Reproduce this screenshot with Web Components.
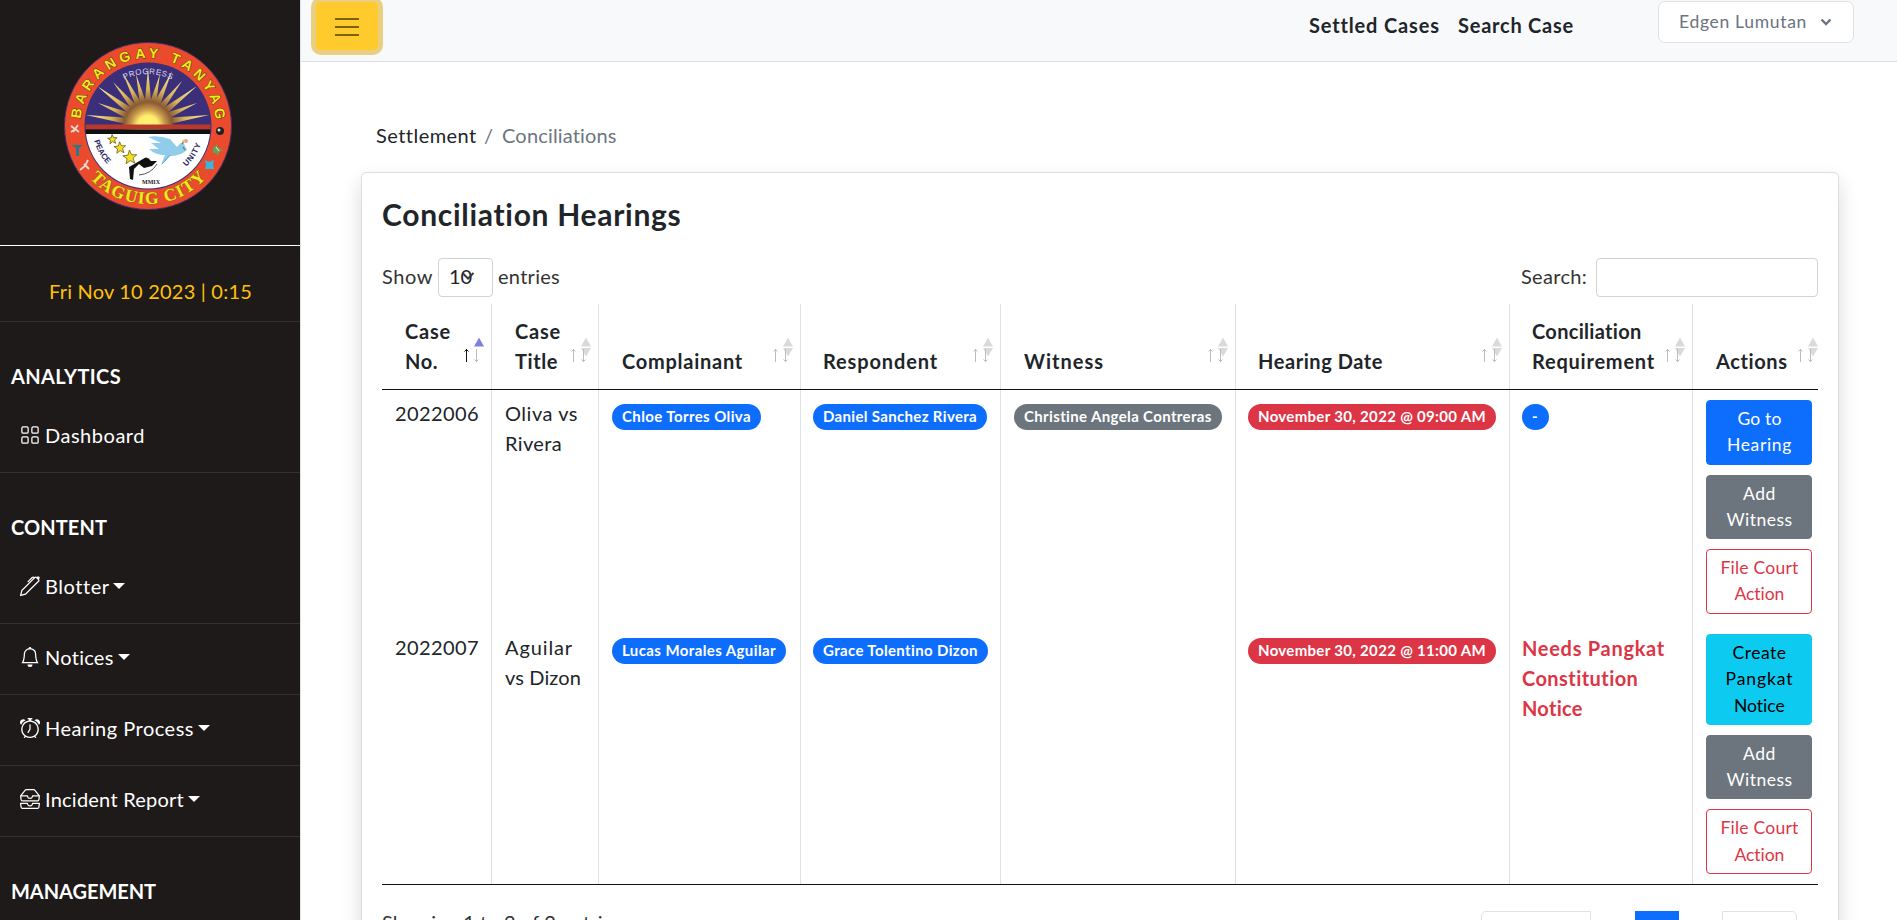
<!DOCTYPE html>
<html lang="en">
<head>
<meta charset="utf-8">
<title>Conciliation Hearings</title>
<style>
  html, body { margin: 0; height: 920px; overflow: hidden; background: #fff; }
  body { font: 400 20px/30px Lato, "Noto Sans", sans-serif; color: #212529; }
</style>
</head>
<body>
<app-shell></app-shell>
<script>
const define = (name, html, extra) => {
  const tpl = document.createElement('template');
  tpl.innerHTML = html;
  customElements.define(name, class extends HTMLElement {
    constructor() {
      super();
      this.attachShadow({ mode: 'open' }).append(tpl.content.cloneNode(true));
    }
    connectedCallback() { if (extra) extra.call(this, this.shadowRoot); }
  });
};

/* Single line of text tracked to an exact measure */
define('fit-text', `<style>:host{display:inline-block;white-space:nowrap}span{display:inline-block}</style><span></span>`, function (r) {
  const s = r.querySelector('span');
  s.textContent = this.getAttribute('t');
  const w = parseFloat(this.getAttribute('w'));
  const fit = () => {
    s.style.letterSpacing = '0';
    const n = s.getBoundingClientRect().width;
    if (n) {
      const k = (w - n) / s.textContent.length;
      s.style.letterSpacing = k.toFixed(3) + 'px';
    }
    this.style.width = w + 'px';
  };
  fit();
});

const ICONS = {
  grid: '<g fill="none" stroke="#fff"><rect x="1.5" y="1.5" width="5" height="5" rx="1"/><rect x="9.5" y="1.5" width="5" height="5" rx="1"/><rect x="1.5" y="9.5" width="5" height="5" rx="1"/><rect x="9.5" y="9.5" width="5" height="5" rx="1"/></g>',
  pen: '<path d="m13.498.795.149-.149a1.207 1.207 0 1 1 1.707 1.708l-.149.148a1.5 1.5 0 0 1-.059 2.059L4.854 14.854a.5.5 0 0 1-.233.131l-4 1a.5.5 0 0 1-.606-.606l1-4a.5.5 0 0 1 .131-.232l9.642-9.642a.5.5 0 0 0-.642.056L6.854 4.854a.5.5 0 1 1-.708-.708L9.44.854A1.5 1.5 0 0 1 11.5.796a1.5 1.5 0 0 1 1.998-.001zm-.644.766a.5.5 0 0 0-.707 0L1.95 11.756l-.764 3.057 3.057-.764L14.44 3.854a.5.5 0 0 0 0-.708l-1.585-1.585z"/>',
  bell: '<path d="M8 16a2 2 0 0 0 2-2H6a2 2 0 0 0 2 2zM8 1.918l-.797.161A4.002 4.002 0 0 0 4 6c0 .628-.134 2.197-.459 3.742-.16.767-.376 1.566-.663 2.258h10.244c-.287-.692-.502-1.49-.663-2.258C12.134 8.197 12 6.628 12 6a4.002 4.002 0 0 0-3.203-3.92L8 1.917zM14.22 12c.223.447.481.801.78 1H1c.299-.199.557-.553.78-1C2.68 10.2 3 6.88 3 6c0-2.42 1.72-4.44 4.005-4.901a1 1 0 1 1 1.99 0A5.002 5.002 0 0 1 13 6c0 .88.32 4.2 1.22 6z"/>',
  alarm: '<path d="M8.5 5.5a.5.5 0 0 0-1 0v3.362l-1.429 2.38a.5.5 0 1 0 .858.515l1.5-2.5A.5.5 0 0 0 8.5 9V5.5z"/><path d="M6.5 0a.5.5 0 0 0 0 1H7v1.07a7.001 7.001 0 0 0-3.273 12.474l-.602.602a.5.5 0 0 0 .707.708l.746-.746A6.97 6.97 0 0 0 8 16a6.97 6.97 0 0 0 3.422-.892l.746.746a.5.5 0 0 0 .707-.708l-.601-.602A7.001 7.001 0 0 0 9 2.07V1h.5a.5.5 0 0 0 0-1h-3zm1.038 3.018a6.093 6.093 0 0 1 .924 0 6 6 0 1 1-.924 0zM0 3.5c0 .753.333 1.429.86 1.887A8.035 8.035 0 0 1 4.387 1.86 2.5 2.5 0 0 0 0 3.5zM13.5 1c-.753 0-1.429.333-1.887.86a8.035 8.035 0 0 1 3.527 3.527A2.5 2.5 0 0 0 13.5 1z"/>',
  inboxes: '<path d="M4.98 1a.5.5 0 0 0-.39.188L1.54 5H6a.5.5 0 0 1 .5.5 1.5 1.5 0 0 0 3 0A.5.5 0 0 1 10 5h4.46l-3.05-3.812A.5.5 0 0 0 11.02 1H4.98zm9.954 5H10.45a2.5 2.5 0 0 1-4.9 0H1.066l.32 2.562A.5.5 0 0 0 1.884 9h12.234a.5.5 0 0 0 .496-.438L14.933 6zM3.809.563A1.5 1.5 0 0 1 4.981 0h6.038a1.5 1.5 0 0 1 1.172.563l3.7 4.625a.5.5 0 0 1 .105.374l-.39 3.124A1.5 1.5 0 0 1 14.117 10H1.883A1.5 1.5 0 0 1 .394 8.686l-.39-3.124a.5.5 0 0 1 .106-.374L3.81.563zM.125 11.17A.5.5 0 0 1 .5 11H6a.5.5 0 0 1 .5.5 1.5 1.5 0 0 0 3 0 .5.5 0 0 1 .5-.5h5.5a.5.5 0 0 1 .496.562l-.39 3.124A1.5 1.5 0 0 1 14.117 16H1.883a1.5 1.5 0 0 1-1.489-1.314l-.39-3.124a.5.5 0 0 1 .121-.393zm.941.83.32 2.562a.5.5 0 0 0 .497.438h12.234a.5.5 0 0 0 .496-.438l.32-2.562H10.45a2.5 2.5 0 0 1-4.9 0H1.066z"/>'
};

/* Sun rays: [tip x, tip y], fanning from the sun at (84, 82) */
const rays = [[22,73],[34,61],[33,44],[49,40],[59,31],[72,32],[84,26],[96,32],[108,29],[118,39],[133,44],[133,61],[145,73]].map(([x, y]) => {
  const dx = x - 84, dy = y - 82, l = Math.hypot(dx, dy), nx = -dy / l * 3.6, ny = dx / l * 3.6;
  const bx = 84 + dx / l * 17, by = 82 + dy / l * 17;
  return `<polygon points="${x},${y} ${bx + nx},${by + ny} ${bx - nx},${by - ny}"/>`;
}).join('');
const star = (cx, cy, r) => {
  let p = '';
  for (let i = 0; i < 10; i++) {
    const a = -Math.PI / 2 + i * Math.PI / 5 - .08, q = i % 2 ? r * .42 : r;
    p += (cx + q * Math.cos(a)).toFixed(1) + ',' + (cy + q * Math.sin(a)).toFixed(1) + ' ';
  }
  return `<polygon points="${p}" fill="#f6e01d" stroke="#6b5a1c" stroke-width=".8"/>`;
};

define('city-seal', `<style>:host{display:block;width:168px;height:168px}svg{display:block}text{font-family:"Liberation Sans",sans-serif;font-weight:700}</style>
<svg width="168" height="168" viewBox="0 0 168 168">
  <defs>
    <radialGradient id="sun" gradientUnits="userSpaceOnUse" cx="84" cy="84" r="62">
      <stop offset="0" stop-color="#fff67a"/><stop offset=".17" stop-color="#ffec6c"/><stop offset=".27" stop-color="#c99a4b"/><stop offset=".39" stop-color="#8a5a34"/><stop offset=".6" stop-color="#d8b45a"/><stop offset="1" stop-color="#f7ee9b"/>
    </radialGradient>
    <clipPath id="disc"><circle cx="84" cy="84" r="62.5"/></clipPath>
    <path id="top" d="M16 84 A68 68 0 0 1 152 84"/>
    <path id="bottom" d="M6 84 A78 78 0 0 0 162 84"/>
    <path id="prog" d="M32 84 A52 52 0 0 1 136 84"/>
    <path id="peace" d="M28 84 A56 56 0 0 0 70 138"/>
    <path id="unity" d="M98 138 A56 56 0 0 0 140 84"/>
  </defs>
  <circle cx="84" cy="84" r="83.5" fill="#e94b2c" stroke="#4a2d68" stroke-width="1"/>
  <circle cx="84" cy="84" r="63.5" fill="#3d2f78"/>
  <g clip-path="url(#disc)">
    <rect x="20" y="20" width="128" height="64" fill="#3c2f7a"/>
    <g fill="url(#sun)">${rays}<circle cx="84" cy="84" r="25"/></g>
    <rect x="20" y="82.5" width="128" height="5" fill="#b7392c"/>
    <rect x="20" y="87.5" width="128" height="4.5" fill="#111"/>
    <rect x="20" y="92" width="128" height="58" fill="#fff"/>
  </g>
  ${star(48.5, 97.5, 5)}${star(56, 106, 6.2)}${star(66, 115.5, 7.4)}
  <path d="M84 95 Q94 93 106 97 L113 105 Q119 98 120 102 L123 108 Q116 114 106 114 L97 123 L101 113 Q91 113 85 107 L95 107 L87 101 L97 101 Z" fill="#91cdea"/>
  <path d="M106 113 L101 119 L98 122" fill="none" stroke="#5aa7cb"/>
  <path d="M65 125 L79 117 Q83 113 87 119 L93 119 L88 124 L80 126 L75 122 L70 127 L69 138 L66 137 Z" fill="#111"/>
  <path d="M75 133 Q87 132 93 122" fill="none" stroke="#555"/>
  <path d="M118 102 L121 98 M119 105 L121 108" stroke="#4b8b3b" stroke-width="1.2"/><circle cx="122" cy="99" r="2" fill="#f29aa6"/><circle cx="119.5" cy="99" r="1.3" fill="#f2c63d"/>
  <text font-size="14" fill="#f1e91b" stroke="#5a3a12" stroke-width="1" paint-order="stroke"><textPath href="#top" startOffset="7" textLength="200" lengthAdjust="spacing">BARANGAY TANYAG</textPath></text>
  <text font-size="17.5" fill="#f1e91b" stroke="#8a6a1a" stroke-width=".9" paint-order="stroke" style="font-family:'Liberation Serif',serif"><textPath href="#bottom" startOffset="57" textLength="131" lengthAdjust="spacing">TAGUIG CITY</textPath></text>
  <text font-size="8" fill="#dcd8ea" style="font-weight:400"><textPath href="#prog" startOffset="57" textLength="49" lengthAdjust="spacing">PROGRESS</textPath></text>
  <text font-size="8" fill="#2b2763"><textPath href="#peace" startOffset="15" textLength="27">PEACE</textPath></text>
  <text font-size="8" fill="#2b2763"><textPath href="#unity" startOffset="28" textLength="27">UNITY</textPath></text>
  <text x="78" y="141.5" font-size="6.5" fill="#222" textLength="18" lengthAdjust="spacingAndGlyphs" style="font-family:'Liberation Serif',serif">MMIX</text>
  <g fill="none" stroke="#f3d9d0" stroke-width="1.8"><path d="M7 84l8 6M14 83l-5 7M7 90l3-2"/><path d="M24 118l-3 6-5 4M20 122l5 5"/></g>
  <path d="M8 103h11l-4 3v8h-3v-8z" fill="#2b7890"/>
  <circle cx="156" cy="89" r="4" fill="#222"/><circle cx="155" cy="88" r="1.5" fill="#ddd"/>
  <path d="M149 106l4-4 1 4 5 2-4 2-1 4-2-3-3 0z" fill="#5fa554"/><path d="M152 105l3 4" stroke="#eee"/>
  <path d="M141 118l4 2 5-2-1 5 1 4h-9l1-4z" fill="#3cb4e0"/>
</svg>`);

define('nav-heading', `<style>:host{display:block;padding:38px 0 12px 11px;font-weight:700;color:#fff}::slotted(*){position:relative;top:.5px}</style><slot></slot>`);

define('nav-item', `<style>
:host{display:block;border-bottom:1px solid #343130;color:#fff}
.row{display:flex;padding:18px 0 22px 20px;height:30px}
svg{width:20px;height:20px;margin-top:5px;fill:#fff;flex:none}
i{display:none;width:0;height:0;border:6px solid transparent;border-top-color:#fff;border-bottom:0;margin:12px 0 0 4px}
:host([drop]) i{display:block}
</style><div class="row"><svg viewBox="0 0 16 16"></svg><slot></slot><i></i></div>`, function (r) {
  r.querySelector('svg').innerHTML = ICONS[this.getAttribute('icon')];
});
define('side-bar', `<style>
:host{display:block;box-sizing:border-box;width:301px;height:920px;overflow:hidden;background:#1e1a19;border-right:1px solid #dee2e6}
.logo{box-sizing:border-box;height:246px;padding:42px 0 0 64px;border-bottom:1px solid #fff}
.date{box-sizing:border-box;height:76px;padding:30px 0 0 49px;border-bottom:1px solid #343130;color:#ffc107}
nav-item fit-text{margin-left:5px}
</style>
<div class="logo"><city-seal></city-seal></div>
<div class="date"><fit-text t="Fri Nov 10 2023 | 0:15" w="203"></fit-text></div>
<nav-heading><fit-text t="ANALYTICS" w="110"></fit-text></nav-heading>
<nav-item icon="grid"><fit-text t="Dashboard" w="100"></fit-text></nav-item>
<nav-heading><fit-text t="CONTENT" w="96"></fit-text></nav-heading>
<nav-item icon="pen" drop><fit-text t="Blotter" w="64"></fit-text></nav-item>
<nav-item icon="bell" drop><fit-text t="Notices" w="69"></fit-text></nav-item>
<nav-item icon="alarm" drop><fit-text t="Hearing Process" w="149"></fit-text></nav-item>
<nav-item icon="inboxes" drop><fit-text t="Incident Report" w="139"></fit-text></nav-item>
<nav-heading><fit-text t="MANAGEMENT" w="145"></fit-text></nav-heading>`);

define('top-bar', `<style>
:host{display:flex;box-sizing:border-box;height:62px;background:#f8f9fb;border-bottom:1px solid #dee0e4;padding-left:15px}
.burger{box-sizing:border-box;width:62px;height:48px;margin-top:2px;border-radius:5px;background:#ffca2c;box-shadow:0 0 0 5px #e9cf80;display:flex;flex-direction:column;gap:6px;padding:16px 0 0 19px}
.burger b{display:block;width:24px;height:2px;background:#7d6212}
.links{display:flex;gap:19px;margin-left:931px;padding-top:10px;font-weight:700}
.user{box-sizing:border-box;width:196px;height:42px;margin:1px 0 0 84px;border:1px solid #dfe1e5;border-radius:7px;background:#fff;color:#6b7280;font-size:17.5px;display:flex;padding:5px 0 0 20px}
.user svg{margin:11px 0 0 13px}
</style>
<div class="burger"><b></b><b></b><b></b></div>
<div class="links"><fit-text t="Settled Cases" w="130"></fit-text><fit-text t="Search Case" w="116"></fit-text></div>
<div class="user"><fit-text t="Edgen Lumutan" w="128"></fit-text><svg width="12" height="9" viewBox="0 0 12 9"><path d="M1.5 1.5 6 6l4.5-4.5" fill="none" stroke="#6b7280" stroke-width="2.3"/></svg></div>`);

define('pill-badge', `<style>
:host{display:block;box-sizing:border-box;height:26px;margin-top:6px;border-radius:13px;background:#0d6efd;color:#fff;font-weight:700;font-size:15px;line-height:24px;padding-left:10px;width:max-content;padding-right:10px}
:host([tone=gray]){background:#6c757d}:host([tone=red]){background:#dc3545}
</style><slot></slot>`);

define('action-button', `<style>
:host{display:flex;flex-direction:column;align-items:center;box-sizing:border-box;width:106px;padding:5px 0 5px 1px;border:1px solid var(--c);border-radius:4px;background:var(--c);color:#fff;font-size:17.5px;line-height:26.25px;--c:#0d6efd}
:host([tone=gray]){--c:#6c757d}
:host([tone=cyan]){--c:#0dcaf0;color:#000}
:host([tone=line]){--c:#dc3545;background:#fff;color:#dc3545}
</style><slot></slot>`);

define('sort-mark', `<style>:host{display:block;position:absolute;top:33px;right:5px;width:24px;height:26px;overflow:hidden}:host([last]){right:0;width:22px}svg{display:block}
g{stroke:#bdbdbd;fill:none}.t{fill:#dadadc;stroke:none}:host([active]) .u{stroke:#111}:host([active]) .tu{fill:#7d81e2}:host([active]) .td{display:none}</style>
<svg width="25" height="26"><path class="t tu" d="M17 0.5 22 9.5H12Z" /><path class="t td" d="M12 11h10L17 19.5Z"/>
<g class="u"><path d="M4.500 12v13M2.500 14.500l2-2 2 2"/></g><g><path d="M14.500 12v13M12.500 22.500l2 2 2-2"/></g></svg>`);

define('th-cell', `<style>:host{position:relative;display:flex;flex-direction:column;justify-content:flex-end;align-items:flex-start;box-sizing:border-box;padding:0 0 13px 23px;border-right:1px solid #dee2e6;font-weight:700}:host([last]){border-right:0}</style><slot></slot>`);
define('td-cell', `<style>:host{display:flex;flex-direction:column;align-items:flex-start;box-sizing:border-box;padding:8px 0 0 13px;border-right:1px solid #dee2e6}:host([last]){border-right:0;padding-top:10px;gap:10px}:host([warn]){color:#dc3545;font-weight:700;padding-top:9px}</style><slot></slot>`);

define('hearing-table', `<style>
:host{display:block}
.r{display:grid;grid-template-columns:110px 107px 202px 200px 235px 274px 183px 125px}
.h{height:85px;border-bottom:1px solid #111}
.a{height:234px}.b{height:260px;border-bottom:1px solid #111}
</style>
<div class="r h">
<th-cell><fit-text t="Case" w="46"></fit-text><fit-text t="No." w="33"></fit-text><sort-mark active></sort-mark></th-cell>
<th-cell><fit-text t="Case" w="46"></fit-text><fit-text t="Title" w="43"></fit-text><sort-mark></sort-mark></th-cell>
<th-cell><fit-text t="Complainant" w="121"></fit-text><sort-mark></sort-mark></th-cell>
<th-cell style="padding-left:22px"><fit-text t="Respondent" w="115"></fit-text><sort-mark></sort-mark></th-cell>
<th-cell><fit-text t="Witness" w="80"></fit-text><sort-mark></sort-mark></th-cell>
<th-cell style="padding-left:22px"><fit-text t="Hearing Date" w="125"></fit-text><sort-mark></sort-mark></th-cell>
<th-cell style="padding-left:22px"><fit-text t="Conciliation" w="110"></fit-text><fit-text t="Requirement" w="123"></fit-text><sort-mark></sort-mark></th-cell>
<th-cell last><fit-text t="Actions" w="72"></fit-text><sort-mark last></sort-mark></th-cell>
</div>
<div class="r a">
<td-cell><fit-text t="2022006" w="84"></fit-text></td-cell>
<td-cell><fit-text t="Oliva vs" w="73"></fit-text><fit-text t="Rivera" w="57"></fit-text></td-cell>
<td-cell><pill-badge><fit-text t="Chloe Torres Oliva" w="129"></fit-text></pill-badge></td-cell>
<td-cell style="padding-left:12px"><pill-badge><fit-text t="Daniel Sanchez Rivera" w="154"></fit-text></pill-badge></td-cell>
<td-cell><pill-badge tone="gray"><fit-text t="Christine Angela Contreras" w="188"></fit-text></pill-badge></td-cell>
<td-cell style="padding-left:12px"><pill-badge tone="red"><fit-text t="November 30, 2022 @ 09:00 AM" w="228"></fit-text></pill-badge></td-cell>
<td-cell style="padding-left:12px"><pill-badge><fit-text t="-" w="7"></fit-text></pill-badge></td-cell>
<td-cell last><action-button><fit-text t="Go to" w="44"></fit-text><fit-text t="Hearing" w="65"></fit-text></action-button>
<action-button tone="gray"><fit-text t="Add" w="33"></fit-text><fit-text t="Witness" w="66"></fit-text></action-button>
<action-button tone="line"><fit-text t="File Court" w="78"></fit-text><fit-text t="Action" w="50"></fit-text></action-button></td-cell>
</div>
<div class="r b">
<td-cell><fit-text t="2022007" w="84"></fit-text></td-cell>
<td-cell><fit-text t="Aguilar" w="68"></fit-text><fit-text t="vs Dizon" w="76"></fit-text></td-cell>
<td-cell><pill-badge><fit-text t="Lucas Morales Aguilar" w="154"></fit-text></pill-badge></td-cell>
<td-cell style="padding-left:12px"><pill-badge><fit-text t="Grace Tolentino Dizon" w="155"></fit-text></pill-badge></td-cell>
<td-cell></td-cell>
<td-cell style="padding-left:12px"><pill-badge tone="red"><fit-text t="November 30, 2022 @ 11:00 AM" w="228"></fit-text></pill-badge></td-cell>
<td-cell warn style="padding-left:12px"><fit-text t="Needs Pangkat" w="143"></fit-text><fit-text t="Constitution" w="117"></fit-text><fit-text t="Notice" w="61"></fit-text></td-cell>
<td-cell last><action-button tone="cyan"><fit-text t="Create" w="54"></fit-text><fit-text t="Pangkat" w="68"></fit-text><fit-text t="Notice" w="51"></fit-text></action-button>
<action-button tone="gray"><fit-text t="Add" w="33"></fit-text><fit-text t="Witness" w="66"></fit-text></action-button>
<action-button tone="line"><fit-text t="File Court" w="78"></fit-text><fit-text t="Action" w="50"></fit-text></action-button></td-cell>
</div>`);

define('table-card', `<style>
:host{display:block;box-sizing:border-box;width:1478px;height:820px;margin:13px 0 0 60px;padding:20px 20px 0;border:1px solid #dcdddf;border-radius:5px;background:#fff;box-shadow:0 10px 20px rgba(0,0,0,.15)}
.title{font-size:30px;font-weight:700;line-height:42px;height:42px}
.tools{display:flex;height:39px;margin-top:23px;color:#333;line-height:30px}
.tools>fit-text{margin-top:3px}
.sel{box-sizing:border-box;position:relative;width:55px;height:39px;margin:0 5px 0 5px;border:1px solid #ced4da;border-radius:4px;padding:2px 0 0 10px;color:#212529}
.sel svg{position:absolute;left:21px;top:11px}
.inp{box-sizing:border-box;width:222px;height:39px;border:1px solid #ced4da;border-radius:4px;margin-left:9px}
.sp{flex:1}
hearing-table{margin-top:7px}
.foot{display:flex;color:#333;padding-top:22px}
.pages{display:flex;margin:4px 0 0 auto;padding-right:21px}
.p{box-sizing:border-box;height:48px;border:1px solid #dee2e6;padding:8px 15px;text-align:center;color:#6c757d}
</style>
<div class="title"><fit-text t="Conciliation Hearings" w="300"></fit-text></div>
<div class="tools"><fit-text t="Show" w="51"></fit-text>
<div class="sel"><fit-text t="10" w="23"></fit-text><svg width="16" height="12"><path d="M2.500 3 8 8.500 13.500 3" fill="none" stroke="#343a40" stroke-width="2"/></svg></div>
<fit-text t="entries" w="62"></fit-text><span class="sp"></span><fit-text t="Search:" w="66"></fit-text><div class="inp"></div></div>
<hearing-table></hearing-table>
<div class="foot"><fit-text t="Showing 1 to 2 of 2 entries" w="240"></fit-text>
<div class="pages"><div class="p" style="width:110px;border-radius:5px 0 0 5px">Previous</div><div class="p" style="width:44px;margin:0 43px 0 44px;background:#0d6efd;border-color:#0d6efd;color:#fff">1</div><div class="p" style="width:75px;border-radius:0 5px 5px 0">Next</div></div></div>`);

define('bread-crumb', `<style>:host{display:flex;padding:58px 0 0 75px;height:39px;line-height:30px;color:#6c757d}.l{color:#212529}.s{margin:0 9px 0 8px}</style>
<fit-text class="l" t="Settlement" w="100"></fit-text><span class="s">/</span><fit-text t="Conciliations" w="115"></fit-text>`);

define('app-shell', `<style>:host{display:grid;grid-template-columns:301px 1fr;height:920px;overflow:hidden}main{min-width:0}</style>
<side-bar></side-bar><main><top-bar></top-bar><bread-crumb></bread-crumb><table-card></table-card></main>`);
</script>
</body>
</html>
